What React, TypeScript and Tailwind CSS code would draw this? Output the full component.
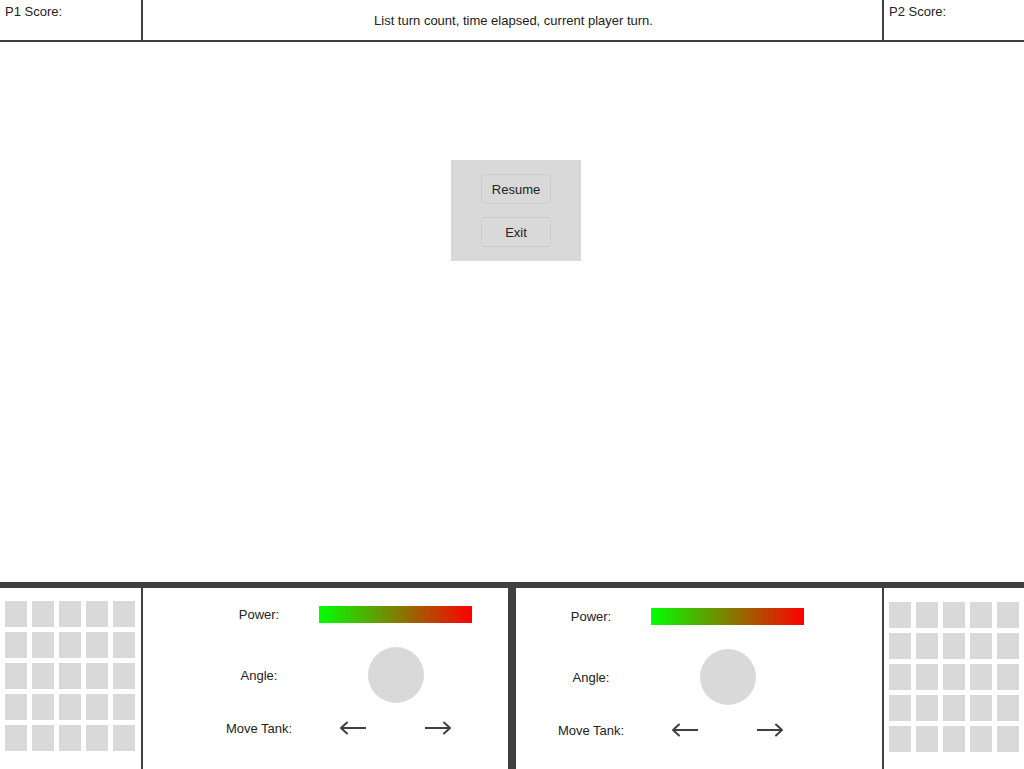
const cells = Array.from({ length: 25 }, (_, i) => i)

// Tile grid for each player's inventory
function TileGrid({ offset }: { offset: string }) {
  return (
    <div className={`grid grid-cols-[repeat(5,22px)] auto-rows-[26px] gap-[5px] pl-[5px] ${offset}`}>
      {cells.map((i) => (
        <div key={i} className="bg-[#d9d9d9]" />
      ))}
    </div>
  )
}

function Arrow({ dir }: { dir: 'left' | 'right' }) {
  return (
    <svg width="27" height="14" viewBox="0 0 27 14" fill="none" stroke="#404040" strokeWidth="2">
      {dir === 'left' ? (
        <>
          <path d="M2 7H27" />
          <path d="M8 1.5L2 7L8 12.5" strokeLinecap="round" strokeLinejoin="round" />
        </>
      ) : (
        <>
          <path d="M0 7H25" />
          <path d="M19 1.5L25 7L19 12.5" strokeLinecap="round" strokeLinejoin="round" />
        </>
      )}
    </svg>
  )
}

// Controls panel: power, angle, move tank
function Controls({ pad }: { pad: string }) {
  return (
    <div className={`flex flex-col ${pad}`}>
      <div className="flex h-[17px] items-center gap-[10px]">
        <span className="w-[100px] text-center">Power:</span>
        <div className="h-[17px] w-[153px] bg-[linear-gradient(to_right,#00ff00,#ff0000)]" />
      </div>
      <div className="mt-[24px] flex h-[56px] items-center gap-[10px]">
        <span className="w-[100px] text-center">Angle:</span>
        <div className="flex w-[153px] justify-center">
          <div className="h-[56px] w-[56px] rounded-full bg-[#d9d9d9]" />
        </div>
      </div>
      <div className="mt-[18px] flex h-[14px] items-center gap-[10px]">
        <span className="w-[100px] text-center">Move Tank:</span>
        <div className="flex w-[153px] justify-between px-[20px]">
          <Arrow dir="left" />
          <Arrow dir="right" />
        </div>
      </div>
    </div>
  )
}

function App() {
  return (
    <div className="flex h-[769px] w-[1024px] flex-col overflow-hidden bg-white text-[13px] leading-[15px] text-[#222] [font-family:'Liberation_Sans',Arial,sans-serif]">
      {/* Top bar */}
      <div className="flex h-[42px] border-b-2 border-[#404040]">
        <div className="w-[143px] border-r-2 border-[#404040] pl-[5px] pt-[4px]">P1 Score:</div>
        <div className="flex w-[741px] items-center justify-center border-r-2 border-[#404040] pl-[2px]">
          List turn count, time elapsed, current player turn.
        </div>
        <div className="flex-1 pl-[5px] pt-[4px]">P2 Score:</div>
      </div>

      {/* Play area */}
      <div className="h-[540px]">
        <div className="ml-[451px] mt-[118px] flex w-[130px] flex-col items-center gap-[13px] bg-[#d9d9d9] py-[14px]">
          <button type="button" className="h-[30px] w-[70px] rounded-[3px] border border-[#cccccc] bg-[#d9d9d9] text-[13px]">
            Resume
          </button>
          <button type="button" className="h-[30px] w-[70px] rounded-[3px] border border-[#cccccc] bg-[#d9d9d9] text-[13px]">
            Exit
          </button>
        </div>
      </div>

      {/* Bottom panel */}
      <div className="flex h-[187px] border-t-[6px] border-[#404040]">
        <div className="w-[143px] border-r-2 border-[#404040]">
          <TileGrid offset="pt-[13px]" />
        </div>
        <div className="w-[365px]">
          <Controls pad="pt-[18px] pl-[66px]" />
        </div>
        <div className="w-[8px] bg-[#404040]" />
        <div className="w-[368px] border-r-2 border-[#404040]">
          <Controls pad="pt-[20px] pl-[25px]" />
        </div>
        <div className="flex-1">
          <TileGrid offset="pt-[14px]" />
        </div>
      </div>
    </div>
  )
}

export default App
